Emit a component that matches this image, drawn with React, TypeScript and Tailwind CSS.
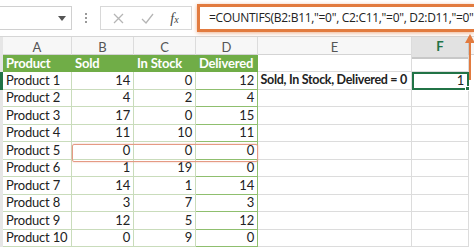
import React from 'react';

const rows: [string, number, number, number][] = [
  ['Product 1', 14, 0, 12],
  ['Product 2', 4, 2, 4],
  ['Product 3', 17, 0, 15],
  ['Product 4', 11, 10, 11],
  ['Product 5', 0, 0, 0],
  ['Product 6', 1, 19, 0],
  ['Product 7', 14, 1, 14],
  ['Product 8', 3, 7, 3],
  ['Product 9', 12, 5, 12],
  ['Product 10', 0, 9, 0],
];

const cols = 'grid grid-cols-[3px_69px_62px_62px_62px_154px_57px_1fr]';

export default function App() {
  return (
    <div className="relative w-[474px] h-[248px] overflow-hidden bg-white text-[#222] font-['Lato','Open_Sans',sans-serif]">
      {/* formula bar strip */}
      <div className="h-[37px] flex items-center border-b border-[#d6d6d6] bg-white">
        <div className="w-[72px] h-[24px] border border-l-0 border-[#d0d0d0] flex items-center justify-end pr-[5px]">
          <svg width="8" height="5" viewBox="0 0 8 5"><path d="M0 0h8L4 5z" fill="#555" /></svg>
        </div>
        <div className="w-[28px] flex flex-col items-center gap-[2px]">
          <span className="w-[2px] h-[2px] bg-[#999]" />
          <span className="w-[2px] h-[2px] bg-[#999]" />
          <span className="w-[2px] h-[2px] bg-[#999]" />
        </div>
        <div className="w-[92px] h-[24px] border border-[#d8d8d8] flex items-center justify-around px-1 text-[#aaa]">
          <svg width="11" height="11" viewBox="0 0 11 11"><path d="M1 1l9 9M10 1l-9 9" stroke="#b5b5b5" strokeWidth="1.3" /></svg>
          <svg width="13" height="11" viewBox="0 0 13 11"><path d="M1 6l4 4 7-9" stroke="#b5b5b5" strokeWidth="1.3" fill="none" /></svg>
          <span className="italic font-['Liberation_Serif',serif] text-[14px] text-[#444]">f<span className="text-[10px]">x</span></span>
        </div>
        <div className="ml-[5px] flex-1 h-[28px] border-[3px] border-r-0 border-[#e27b3f] shadow-[0_1px_4px_rgba(226,123,63,0.6)] flex items-center pl-[9px] whitespace-nowrap overflow-hidden text-[12px] text-[#222] font-['Open_Sans',sans-serif] tracking-[-0.3px]">
          =COUNTIFS(B2:B11,"=0", C2:C11,"=0", D2:D11,"=0"
        </div>
      </div>

      {/* column letters */}
      <div className={`${cols} h-[18px] bg-[#f7f7f7] text-[13px] text-[#555] border-b border-[#d4d4d4]`}>
        <div className="bg-[#e6e6e6]" />
        {['A', 'B', 'C', 'D', 'E'].map((c) => (
          <div key={c} className="flex items-center justify-center border-r border-[#dcdcdc]">{c}</div>
        ))}
        <div className="flex items-center justify-center bg-[#e2e2e2] border-b-2 border-[#217346] font-bold text-[#217346] border-r border-[#c8c8c8]">F</div>
        <div />
      </div>

      {/* table header */}
      <div className={`${cols} h-[17px] text-[13px] tracking-[-0.2px]`}>
        <div className="bg-[#e6e6e6]" />
        {['Product', 'Sold', 'In Stock', 'Delivered'].map((h) => (
          <div key={h} className="bg-[#70ad47] text-white font-bold flex items-center pl-[3px] leading-none whitespace-nowrap overflow-hidden">{h}</div>
        ))}
        <div className="border-b border-r border-[#dcdcdc]" />
        <div className="border-b border-r border-[#dcdcdc]" />
        <div />
      </div>

      {rows.map(([name, a, b, c], i) => (
        <div key={name} className={`${cols} h-[17.5px] text-[13px] leading-none tracking-[-0.2px] whitespace-nowrap`}>
          <div className={i === 0 ? 'bg-[#217346]' : 'bg-[#e6e6e6]'} />
          <div className="flex items-center pl-[3px] border-b border-r border-[#c9dcbb] overflow-hidden">{name}</div>
          <div className="flex items-center justify-end pr-[3px] border-b border-r border-[#c9dcbb]">{a}</div>
          <div className="flex items-center justify-end pr-[3px] border-b border-r border-[#c9dcbb]">{b}</div>
          <div className="flex items-center justify-end pr-[3px] border-b border-r border-[#8fbf6e]">{c}</div>
          <div className="flex items-center justify-end pr-[4px] border-b border-r border-[#dcdcdc] font-bold text-[12.5px] tracking-[-0.3px] overflow-hidden">
            {i === 0 ? 'Sold, In Stock, Delivered = 0' : ''}
          </div>
          {i === 0 ? (
            <div className="relative flex items-center justify-end pr-[3px] border-2 border-[#217346]">
              1
              <span className="absolute -right-[3px] -bottom-[3px] w-[5px] h-[5px] bg-[#217346] border border-white" />
            </div>
          ) : (
            <div className="border-b border-r border-[#dcdcdc]" />
          )}
          <div />
        </div>
      ))}

      {/* highlight around product 5 values */}
      <div className="absolute left-[72px] top-[144px] w-[186px] h-[18px] rounded-[2px] border border-[#e59a84] shadow-[0_0_2px_rgba(229,154,132,0.7)]" />

      {/* arrow from F2 to formula */}
      <svg className="absolute left-[464px] top-[32px]" width="10" height="50" viewBox="0 0 10 50">
        <path d="M6 4v44" stroke="#e27b3f" strokeWidth="2" />
        <path d="M1 11L6 2l5 9z" fill="#e27b3f" />
      </svg>
    </div>
  );
}
